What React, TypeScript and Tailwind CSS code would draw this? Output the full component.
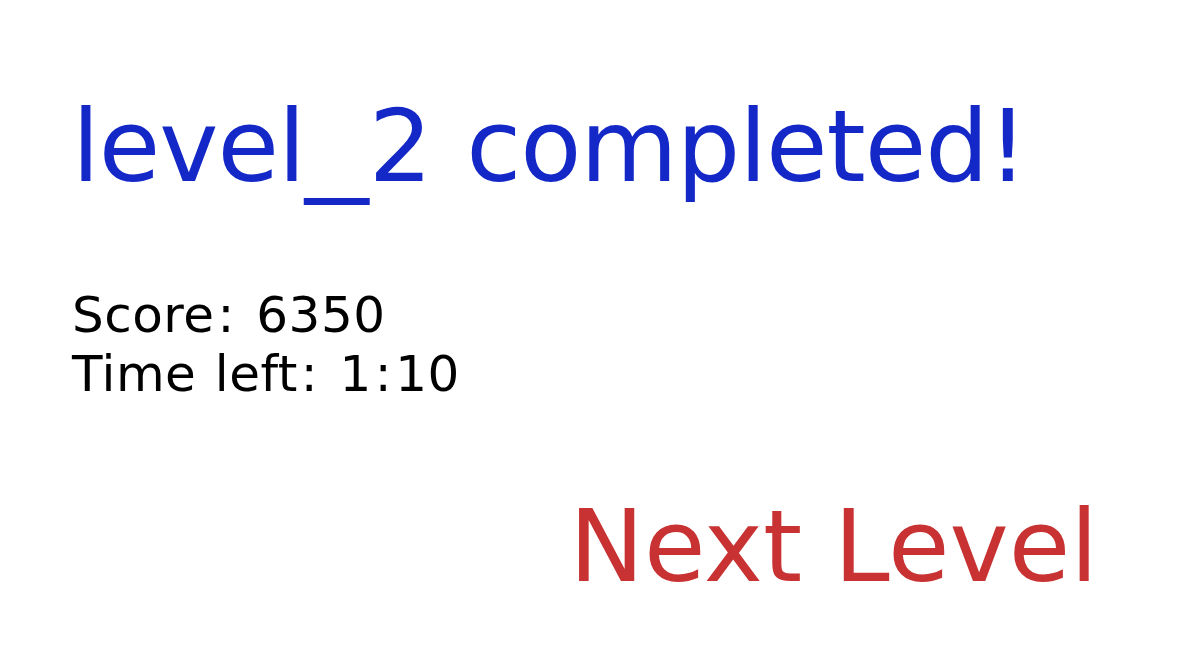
// Verdana-ish spacing on top of DejaVu Sans: wider colons, spaces and underscore
function Colon() {
  return <span className="mx-[3px]">:</span>;
}

export default function App() {
  return (
    <div
      className="w-[1194px] h-[671px] bg-white flex flex-col pl-[72px] pt-[89px] overflow-hidden"
      style={{ fontFamily: '"DejaVu Sans", Verdana, sans-serif' }}
    >
      <h1 className="text-[100px] leading-[116px] text-[#1428c8] whitespace-nowrap tracking-[-1px] [word-spacing:4px]">
        level
        <span className="inline-block w-[64px]">
          <span className="inline-block origin-left scale-x-[1.27]">_</span>
        </span>
        2 completed!
      </h1>

      <div className="mt-[81px] text-[50px] leading-[59px] text-black whitespace-nowrap tracking-[0.5px] [word-spacing:2px]">
        <p>
          Score<Colon /> 6350
        </p>
        <p>
          Time left<Colon /> 1<Colon />10
        </p>
      </div>

      <div className="mt-[85px] flex justify-end pr-[96px]">
        <button className="text-[100px] leading-[116px] text-[#c83232] whitespace-nowrap">Next Level</button>
      </div>
    </div>
  );
}
